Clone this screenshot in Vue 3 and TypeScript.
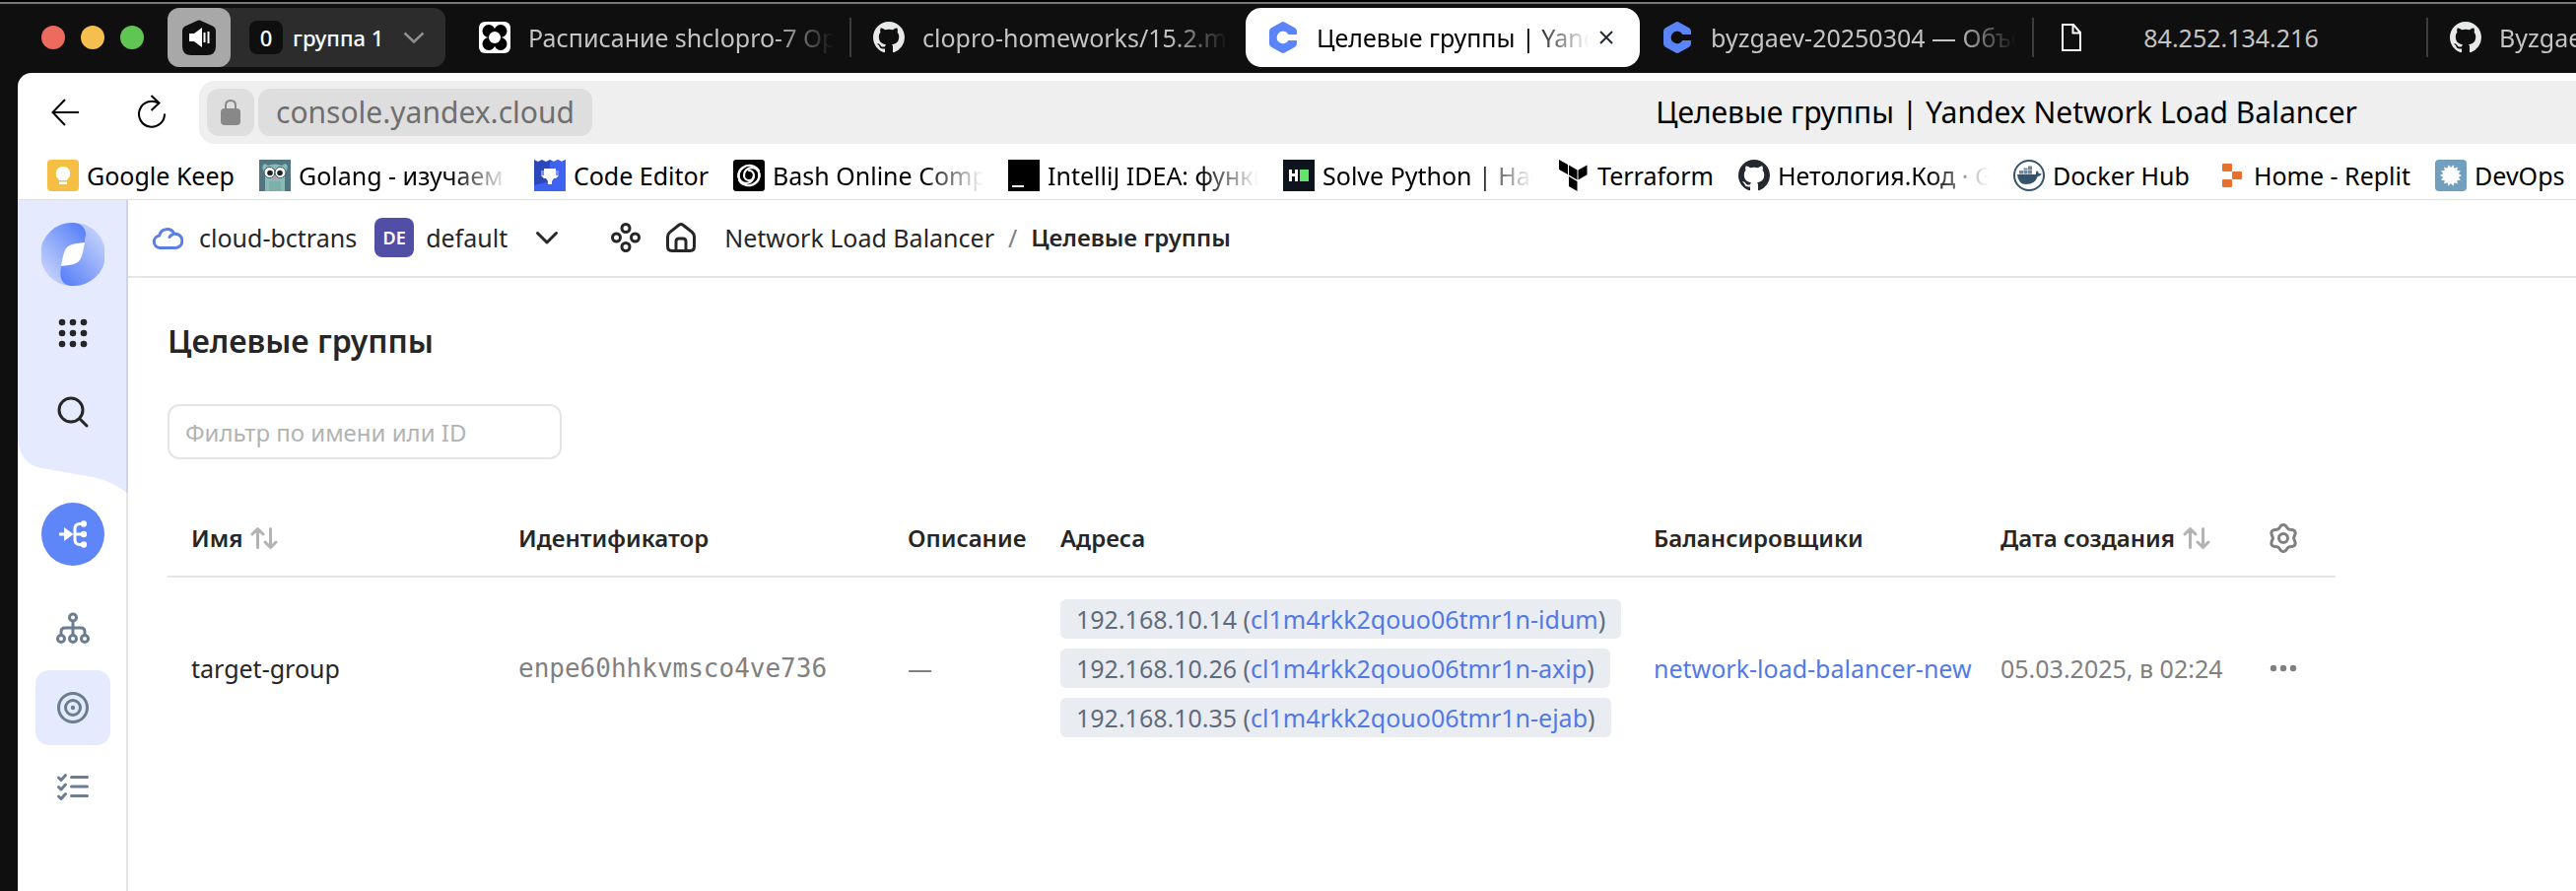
<script setup lang="ts">
import { ref } from 'vue'

interface Tab {
  icon: string
  title: string
  active?: boolean
  centered?: boolean
  divider?: boolean
}

interface Bookmark {
  icon: string
  title: string
  long?: boolean
}

interface Target {
  ip: string
  subnet: string
}

const tabs: Tab[] = [
  { icon: 'calendar', title: 'Расписание shclopro-7 Оренбург', divider: true },
  { icon: 'github', title: 'clopro-homeworks/15.2.md at main' },
  { icon: 'console', title: 'Целевые группы | Yandex Network', active: true },
  { icon: 'console', title: 'byzgaev-20250304 — Объекты', divider: true },
  { icon: 'file', title: '84.252.134.216', centered: true, divider: true },
  { icon: 'github', title: 'Byzgaev' },
]

const bookmarks: Bookmark[] = [
  { icon: 'keep', title: 'Google Keep' },
  { icon: 'gopher', title: 'Golang - изучаем Go', long: true },
  { icon: 'shield', title: 'Code Editor' },
  { icon: 'bash', title: 'Bash Online Compiler', long: true },
  { icon: 'terminal', title: 'IntelliJ IDEA: функции', long: true },
  { icon: 'hacker', title: 'Solve Python | HackerRank', long: true },
  { icon: 'terraform', title: 'Terraform' },
  { icon: 'github', title: 'Нетология.Код · GitHub', long: true },
  { icon: 'docker', title: 'Docker Hub' },
  { icon: 'replit', title: 'Home - Replit' },
  { icon: 'devops', title: 'DevOps' },
]

const sections = [
  { icon: 'tree', label: 'Балансировщики', active: false },
  { icon: 'target', label: 'Целевые группы', active: true },
  { icon: 'checklist', label: 'Операции', active: false },
]

const targets: Target[] = [
  { ip: '192.168.10.14', subnet: 'cl1m4rkk2qouo06tmr1n-idum' },
  { ip: '192.168.10.26', subnet: 'cl1m4rkk2qouo06tmr1n-axip' },
  { ip: '192.168.10.35', subnet: 'cl1m4rkk2qouo06tmr1n-ejab' },
]

const filter = ref('')

const gearPath =
  Array.from({ length: 72 }, (_, i) => {
    const a = (i / 72) * Math.PI * 2
    const r = 12.1 + 1.5 * Math.cos(6 * (a - Math.PI / 2))
    return `${i ? 'L' : 'M'}${(16 + r * Math.cos(a)).toFixed(2)} ${(16 - r * Math.sin(a)).toFixed(2)}`
  }).join('') + 'Z'

const splat =
  Array.from({ length: 28 }, (_, i) => {
    const a = (i / 28) * Math.PI * 2
    const r = i % 2 ? 8 : 11
    return `${i ? 'L' : 'M'}${(16 + r * Math.cos(a)).toFixed(2)} ${(16 + r * Math.sin(a)).toFixed(2)}`
  }).join('') + 'Z'
</script>

<template>
  <svg class="sprite" aria-hidden="true">
    <defs>
      <linearGradient id="blade-left" x1="0.8" y1="0" x2="0.1" y2="0.85">
        <stop offset="0" stop-color="#5c83f8" />
        <stop offset="1" stop-color="#c5d3fb" />
      </linearGradient>
      <linearGradient id="blade-right" x1="0.2" y1="1" x2="0.9" y2="0.15">
        <stop offset="0" stop-color="#5c83f8" />
        <stop offset="1" stop-color="#c5d3fb" />
      </linearGradient>
    </defs>
    <symbol id="i-calendar" viewBox="0 0 32 32">
      <rect width="32" height="32" rx="6" fill="#fff" />
      <circle cx="10" cy="9.500" r="6.500" />
      <circle cx="22" cy="9.500" r="6.500" />
      <circle cx="10" cy="22.500" r="6.500" />
      <circle cx="22" cy="22.500" r="6.500" />
      <circle cx="16" cy="16" r="6" fill="#fff" />
    </symbol>
    <symbol id="i-github" viewBox="0 0 16 16">
      <path
        fill="currentColor"
        d="M8 0C3.58 0 0 3.58 0 8c0 3.54 2.29 6.53 5.47 7.59.4.07.55-.17.55-.38 0-.19-.01-.82-.01-1.49-2.01.37-2.53-.49-2.69-.94-.09-.23-.48-.94-.82-1.13-.28-.15-.68-.52-.01-.53.63-.01 1.08.58 1.23.82.72 1.21 1.87.87 2.33.66.07-.52.28-.87.51-1.07-1.78-.2-3.64-.89-3.64-3.95 0-.87.31-1.59.82-2.15-.08-.2-.36-1.02.08-2.12 0 0 .67-.21 2.2.82.64-.18 1.32-.27 2-.27.68 0 1.36.09 2 .27 1.53-1.04 2.2-.82 2.2-.82.44 1.1.16 1.92.08 2.12.51.56.82 1.27.82 2.15 0 3.07-1.87 3.75-3.65 3.95.29.25.54.73.54 1.48 0 1.07-.01 1.93-.01 2.2 0 .21.15.46.55.38A8.013 8.013 0 0016 8c0-4.42-3.58-8-8-8z"
      />
    </symbol>
    <symbol id="i-console" viewBox="0 0 32 32">
      <path
        fill="#5c84f9"
        d="M14 .7q2-1.200 4 0L28 6.300q2 1.200 2 3.500V13h-8.600a6.300 6.300 0 1 0 0 6H30v3.200q0 2.300-2 3.500l-10 5.600q-2 1.200-4 0L4 25.700q-2-1.200-2-3.500V9.800q0-2.300 2-3.500z"
      />
    </symbol>
    <symbol id="i-file" viewBox="0 0 32 32">
      <path fill="none" stroke="#fff" stroke-width="2" d="M7 3h11l7 8v18H7zM17.500 3v8.500H25" />
    </symbol>
    <symbol id="i-keep" viewBox="0 0 32 32">
      <rect width="32" height="32" rx="4" fill="#f4bf42" />
      <path fill="#fff" d="M16 7a7.200 7.200 0 0 0-4 13.200V21h8v-.8A7.200 7.200 0 0 0 16 7zm-4 15.500h8V25h-8z" />
    </symbol>
    <symbol id="i-gopher" viewBox="0 0 32 32">
      <rect width="32" height="32" fill="#4f7681" />
      <path fill="#8abab5" d="M6 32V14Q2 9 4 5q2-2 5 1 7-3 14 0 3-3 5-1 2 4-2 9v18z" />
      <path fill="#6fa3a1" d="M10 22h12v10H10z" opacity=".5" />
      <circle cx="10.500" cy="13" r="5.500" fill="#fff" stroke="#33545e" />
      <circle cx="21.500" cy="13" r="5.500" fill="#fff" stroke="#33545e" />
      <circle cx="11" cy="13.500" r="2.800" fill="#222" />
      <circle cx="21" cy="13.500" r="2.800" fill="#222" />
      <ellipse cx="16" cy="18.500" rx="2.200" ry="1.500" fill="#d98f92" />
    </symbol>
    <symbol id="i-shield" viewBox="0 0 32 32">
      <path fill="#2c47b8" d="M0 0l4 2 4-2 4 2 4-2 4 2 4-2 4 2 4-2v32H0z" />
      <path fill="#3f62f0" d="M16 2l4 0 4-2 4 2 4-2v32H16zM0 26l16-4v10H0z" />
      <path fill="#fff" d="M10 9h12v2h3v5l-3 3h-2l-2 3v3h-4v-3l-2-3h-2l-3-3v-5h3z" />
      <path fill="#7c95f5" d="M7 11h3v5H7zM22 11h3v5h-3z" />
    </symbol>
    <symbol id="i-bash" viewBox="0 0 32 32">
      <rect width="32" height="32" rx="3" />
      <g fill="none" stroke="#fff" stroke-width="2.200" stroke-linecap="round">
        <path d="M16 11a5 5 0 1 1-5 5" />
        <path d="M11 16a8 8 0 0 1 12.500-6.500A9 9 0 0 1 22 24" />
        <path d="M21 16a8 8 0 0 1-12.500 6.500A9 9 0 0 1 10 8" />
        <path d="M10 8a11 11 0 0 1 16 3M22 24a11 11 0 0 1-16-3M26.500 14a11 11 0 0 1-4.500 10M5.500 18A11 11 0 0 1 10 8" />
      </g>
    </symbol>
    <symbol id="i-terminal" viewBox="0 0 32 32">
      <rect width="32" height="32" />
      <rect x="4" y="26" width="12" height="2" fill="#fff" />
    </symbol>
    <symbol id="i-hacker" viewBox="0 0 32 32">
      <rect width="32" height="32" fill="#0e141e" />
      <path fill="#fff" d="M6 10h3v4h3v-4h3v12h-3v-5H9v5H6z" />
      <rect x="17" y="10" width="9" height="12" fill="#62e36a" />
    </symbol>
    <symbol id="i-terraform" viewBox="0 0 32 32">
      <path d="M1 0l9 5v10l-9-5zM11 5.500l8.500 5v10L11 15.500zM20.500 10.500l9-5v9.800l-9 5.200zM11 17l8.500 5v10L11 27z" />
    </symbol>
    <symbol id="i-docker" viewBox="0 0 32 32">
      <circle cx="16" cy="16" r="15" fill="#fff" stroke="#34546b" stroke-width="2" />
      <path fill="#34546b" d="M4 15h19q-.5-2 1-4 1.500 1 1.800 3 1.700-.2 3 .6-1 2.200-4 2.400Q22 25 13 25q-8 0-9-10z" />
      <path fill="#6f8799" d="M6 11h4v3.500H6zM10.500 11h4v3.500h-4zM15 11h4v3.500h-4zM10.500 8.500h4v2h-4zM15 6.500h4v4h-4z" />
    </symbol>
    <symbol id="i-replit" viewBox="0 0 32 32">
      <g fill="#e8702f">
        <rect x="8" y="4" width="10" height="8" rx="1" />
        <rect x="18" y="12" width="10" height="8" rx="1" />
        <rect x="8" y="20" width="10" height="8" rx="1" />
      </g>
    </symbol>
    <symbol id="i-devops" viewBox="0 0 32 32">
      <rect width="32" height="32" rx="4" fill="#729fbd" />
      <path :d="splat" fill="#fff" />
    </symbol>
    <symbol id="i-tree" viewBox="0 0 34 34">
      <g fill="none" stroke="currentColor" stroke-width="3">
        <circle cx="17" cy="5.500" r="3.500" />
        <circle cx="5" cy="27" r="3.500" />
        <circle cx="17" cy="27" r="3.500" />
        <circle cx="29" cy="27" r="3.500" />
        <path d="M17 9v14.500M5 23.500V20q0-4 4-4h16q4 0 4 4v3.500" />
      </g>
    </symbol>
    <symbol id="i-target" viewBox="0 0 34 34">
      <g fill="none" stroke="currentColor" stroke-width="3">
        <circle cx="17" cy="17" r="14.500" />
        <circle cx="17" cy="17" r="7.500" />
      </g>
      <circle cx="17" cy="17" r="2.200" fill="currentColor" />
    </symbol>
    <symbol id="i-checklist" viewBox="0 0 34 34">
      <path
        fill="none"
        stroke="currentColor"
        stroke-width="3"
        stroke-linecap="round"
        stroke-linejoin="round"
        d="M15.500 7.500h16M15.500 17h16M15.500 26.500h16M2.500 8l2.500 2.500 4.500-5M2.500 17.500L5 20l4.500-5M2.500 27L5 29.500l4.500-5"
      />
    </symbol>
    <symbol id="i-sort" viewBox="0 0 28 24">
      <path
        fill="none"
        stroke="currentColor"
        stroke-width="3"
        stroke-linecap="round"
        stroke-linejoin="round"
        d="M7.500 21.500V3M2 8l5.500-5.500L13 8M20.500 2.500V21M15 16l5.500 5.500L26 16"
      />
    </symbol>
  </svg>

  <div class="window">
    <header class="tabstrip">
      <div class="lights">
        <span class="light light--red"></span>
        <span class="light light--yellow"></span>
        <span class="light light--green"></span>
      </div>
      <div class="group">
        <button class="group-sound" type="button" aria-label="Звук">
          <svg width="34" height="36" viewBox="0 0 34 36">
            <path d="M14 1.500q3-2 6 0l11 5q3 1.500 3 5V27q0 9-9 9H9q-9 0-9-9V11.500q0-3.500 3-5z" fill="#0f0f0f" />
            <path d="M7 14h5l8-6v20l-8-6H7z" fill="#fff" />
            <path d="M22.500 13v10M26.500 12v12" stroke="#fff" stroke-width="2" />
          </svg>
        </button>
        <button class="group-name" type="button">
          <span class="group-count">0</span>
          <span>группа 1</span>
          <svg class="group-chevron" width="22" height="12" viewBox="0 0 22 12">
            <path d="M1.500 1.500L11 10.500l9.500-9" fill="none" stroke="#8f8f8f" stroke-width="2.500" />
          </svg>
        </button>
      </div>
      <nav class="tabs" aria-label="Вкладки">
        <div
          v-for="tab in tabs"
          :key="tab.title"
          class="tab"
          :class="{ 'tab--active': tab.active, 'tab--centered': tab.centered, 'tab--divider': tab.divider }"
        >
          <svg class="favicon"><use :href="`#i-${tab.icon}`" /></svg>
          <span class="tab-title fade">{{ tab.title }}</span>
          <button v-if="tab.active" class="tab-close" type="button" aria-label="Закрыть вкладку">
            <svg width="14" height="14" viewBox="0 0 14 14">
              <path d="M1 1l12 12M13 1L1 13" stroke="#222b36" stroke-width="2" />
            </svg>
          </button>
        </div>
      </nav>
    </header>

    <div class="frame">
      <div class="toolbar">
        <button type="button" aria-label="Назад">
          <svg width="28" height="36" viewBox="0 0 28 36">
            <path d="M28 18H2M14 5L1.500 18 14 31" fill="none" stroke="#000" stroke-width="2" />
          </svg>
        </button>
        <button class="reload" type="button" aria-label="Обновить">
          <svg width="28" height="36" viewBox="0 0 28 36">
            <path d="M20.500 8.500A13 13 0 1 0 27 19.500M13.500 1l8 7.500-8 7.500" fill="none" stroke="#000" stroke-width="2" />
          </svg>
        </button>
        <div class="address">
          <button class="chip chip--lock" type="button" aria-label="Соединение защищено">
            <svg width="20" height="28" viewBox="0 0 20 28">
              <path d="M5 12V7q0-5 5-5t5 5v5" fill="none" stroke="#888" stroke-width="2" />
              <rect y="10" width="20" height="17" rx="4" fill="#888" />
            </svg>
          </button>
          <button class="chip chip--domain" type="button">console.yandex.cloud</button>
          <span class="page-title">Целевые группы | Yandex Network Load Balancer</span>
        </div>
      </div>

      <nav class="bookmarks" aria-label="Закладки">
        <a v-for="mark in bookmarks" :key="mark.title" class="bookmark" href="#">
          <svg class="favicon"><use :href="`#i-${mark.icon}`" /></svg>
          <span :class="{ 'bookmark-long fade': mark.long }">{{ mark.title }}</span>
        </a>
      </nav>

      <div class="console">
        <aside class="sidebar">
          <svg class="sidebar-wave" width="112" height="298" viewBox="0 0 112 298">
            <path d="M0 0h112v298C102 290 90 284 76 281L24 272C8 269 0 256 0 240z" fill="#e6eafe" />
            <path d="M110 0h2v298l-2-1.500z" fill="#cfd4e8" />
          </svg>
          <a class="logo" href="#" aria-label="Yandex Cloud">
            <svg width="64" height="64" viewBox="0 0 64 64">
              <path
                d="M32 0C42 0 46 7 45 13L44 20 20 44C18 53 19 62 30 64A32 32 0 0 1 32 0z"
                fill="url(#blade-left)"
              />
              <path
                d="M34 0C42 1 46 7 45 13L44 20 20 44C18 53 19 62 29 64H32A32 32 0 0 0 34 0z"
                fill="url(#blade-right)"
              />
              <path d="M44 20C41 36 40 39 34 41.500 30 43 26 43 20 44 23 28 24 25 30 22.500 34 21 38 21 44 20z" fill="#fff" />
            </svg>
          </a>
          <button class="side-item side-item--dark side-item--apps" type="button" aria-label="Все сервисы">
            <svg width="32" height="32" viewBox="0 0 32 32" fill="currentColor">
              <template v-for="y in 3" :key="y">
                <circle v-for="x in 3" :key="x" :cx="x * 11 - 6" :cy="y * 11 - 6" r="3.300" />
              </template>
            </svg>
          </button>
          <button class="side-item side-item--dark" type="button" aria-label="Поиск">
            <svg width="32" height="32" viewBox="0 0 32 32">
              <g fill="none" stroke="currentColor" stroke-width="3" stroke-linecap="round">
                <circle cx="14" cy="14" r="12" />
                <path d="M23 23l7 7" />
              </g>
            </svg>
          </button>
          <a class="service" href="#" aria-label="Network Load Balancer">
            <svg width="28" height="28" viewBox="0 0 28 28">
              <path d="M0 12.500h5V7l9.500 7L5 21v-5.500H0z" fill="#fff" />
              <path d="M26 3.500h-5q-5 0-5 5v11q0 5 5 5h5M16 14h9" fill="none" stroke="#fff" stroke-width="3" />
              <circle cx="25" cy="3.500" r="3.200" fill="#fff" />
              <circle cx="25" cy="14" r="3.200" fill="#fff" />
              <circle cx="25" cy="24.500" r="3.200" fill="#fff" />
            </svg>
          </a>
          <a
            v-for="section in sections"
            :key="section.icon"
            class="side-item"
            :class="{ 'side-item--active': section.active }"
            href="#"
            :aria-label="section.label"
          >
            <svg width="34" height="34"><use :href="`#i-${section.icon}`" /></svg>
          </a>
        </aside>

        <main class="main">
          <div class="crumbs">
            <a class="cloud" href="#">
              <svg width="32" height="24" viewBox="0 0 32 24">
                <path
                  d="M18 11.500a7 7 0 0 1 5.500-3.300 7.100 7.100 0 0 1 .5 14.300H8A6.300 6.300 0 0 1 7.700 10 8 8 0 0 1 22.700 8"
                  fill="none"
                  stroke="#5a7ee8"
                  stroke-width="3"
                  stroke-linecap="round"
                />
              </svg>
              <span>cloud-bctrans</span>
            </a>
            <button class="folder" type="button">
              <span class="badge">DE</span>
              <span>default</span>
              <svg class="folder-chevron" width="32" height="32" viewBox="0 0 32 32">
                <path
                  d="M6.500 11.500l9.500 9.500 9.500-9.500"
                  fill="none"
                  stroke="currentColor"
                  stroke-width="3"
                  stroke-linecap="round"
                  stroke-linejoin="round"
                />
              </svg>
            </button>
            <button class="crumb-icon" type="button" aria-label="Сервисы">
              <svg width="32" height="32" viewBox="0 0 32 32" fill="none" stroke="currentColor" stroke-width="3">
                <circle cx="16" cy="6.500" r="4" />
                <circle cx="6.500" cy="16" r="4" />
                <circle cx="25.500" cy="16" r="4" />
                <circle cx="16" cy="25.500" r="4" />
              </svg>
            </button>
            <a class="home" href="#" aria-label="Главная">
              <svg width="32" height="32" viewBox="0 0 32 32" fill="none" stroke="currentColor" stroke-width="3">
                <path d="M14 3.300q2-1.500 4 0l9 7q2.500 2 2.500 5V25q0 4.500-4.500 4.500H7Q2.500 29.500 2.500 25v-9.700q0-3 2.500-5z" />
                <path d="M11 29V20q0-3 3-3h4q3 0 3 3v9" />
              </svg>
            </a>
            <a class="crumb" href="#">Network Load Balancer</a>
            <span class="slash">/</span>
            <strong class="current">Целевые группы</strong>
          </div>

          <section class="content">
            <h1>Целевые группы</h1>
            <input v-model="filter" class="filter" type="text" placeholder="Фильтр по имени или ID" aria-label="Фильтр по имени или ID" />
            <table class="grid">
              <colgroup>
                <col class="c-name" />
                <col class="c-id" />
                <col class="c-desc" />
                <col class="c-addr" />
                <col class="c-lb" />
                <col class="c-date" />
                <col class="c-act" />
              </colgroup>
              <thead>
                <tr>
                  <th>
                    <button class="sort" type="button">Имя <svg width="28" height="24"><use href="#i-sort" /></svg></button>
                  </th>
                  <th>Идентификатор</th>
                  <th>Описание</th>
                  <th>Адреса</th>
                  <th>Балансировщики</th>
                  <th>
                    <button class="sort" type="button">Дата создания <svg width="28" height="24"><use href="#i-sort" /></svg></button>
                  </th>
                  <th class="actions">
                    <button type="button" aria-label="Настройки таблицы">
                      <svg width="32" height="32" viewBox="0 0 32 32" fill="none" stroke="#808080" stroke-width="3">
                        <path :d="gearPath" stroke-linejoin="round" />
                        <circle cx="16" cy="16" r="4.500" />
                      </svg>
                    </button>
                  </th>
                </tr>
              </thead>
              <tbody>
                <tr>
                  <td>target-group</td>
                  <td class="mono">enpe60hhkvmsco4ve736</td>
                  <td class="muted">—</td>
                  <td>
                    <ul class="tags">
                      <li v-for="target in targets" :key="target.ip" class="tag">
                        {{ target.ip }} (<a href="#">{{ target.subnet }}</a>)
                      </li>
                    </ul>
                  </td>
                  <td><a href="#">network-load-balancer-new</a></td>
                  <td class="muted">05.03.2025, в 02:24</td>
                  <td class="actions">
                    <button type="button" aria-label="Действия">
                      <svg width="28" height="8" viewBox="0 0 28 8" fill="#808080">
                        <circle cx="4" cy="4" r="3.200" />
                        <circle cx="14" cy="4" r="3.200" />
                        <circle cx="24" cy="4" r="3.200" />
                      </svg>
                    </button>
                  </td>
                </tr>
              </tbody>
            </table>
          </section>
        </main>
      </div>
    </div>
  </div>
</template>

<style>
body {
  margin: 0;
  overflow: hidden;
}
</style>

<style scoped>
.sprite {
  position: absolute;
  width: 0;
  height: 0;
}

.window {
  display: flex;
  flex-direction: column;
  box-sizing: border-box;
  min-height: 100vh;
  overflow: hidden;
  border-top: 2px solid #000;
  background: #0f0f0f;
  color: #262626;
  font: 25px/36px 'Noto Sans', 'Open Sans', sans-serif;
}

.window svg {
  display: block;
  flex: none;
}

button {
  padding: 0;
  border: 0;
  background: none;
  color: inherit;
  font: inherit;
  cursor: pointer;
}

a {
  color: #5279e6;
  text-decoration: none;
}

.favicon {
  width: 32px;
  height: 32px;
}

.fade {
  overflow: hidden;
  white-space: nowrap;
  -webkit-mask-image: linear-gradient(to left, transparent, #000 60px);
  mask-image: linear-gradient(to left, transparent, #000 60px);
}

/* Tab strip */
.tabstrip {
  display: flex;
  align-items: center;
  height: 60px;
  padding: 4px 0 6px 42px;
  border-top: 2px solid #777;
}

.lights {
  display: flex;
  gap: 16px;
  margin-right: 24px;
}

.light {
  width: 24px;
  height: 24px;
  border-radius: 50%;
}

.light--red {
  background: #ec6a5e;
}

.light--yellow {
  background: #f4bf4f;
}

.light--green {
  background: #61c554;
}

.group {
  display: flex;
  flex: none;
  width: 282px;
  height: 60px;
  margin-right: 12px;
  border-radius: 12px;
  background: #2c2c2c;
}

.group-sound {
  display: flex;
  align-items: center;
  justify-content: center;
  width: 64px;
  border-radius: 12px;
  background: #a8a8a8;
}

.group-name {
  display: flex;
  flex: 1;
  align-items: center;
  gap: 10px;
  padding-left: 19px;
  color: #fff;
  font-size: 22px;
  font-weight: 500;
}

.group-count {
  width: 34px;
  border-radius: 8px;
  background: #0f0f0f;
  line-height: 34px;
  text-align: center;
}

.group-chevron {
  margin-left: 10px;
}

.tabs {
  display: flex;
  flex: 1;
  min-width: 0;
  overflow: hidden;
}

.tab {
  position: relative;
  display: flex;
  flex: none;
  align-items: center;
  box-sizing: border-box;
  width: 400px;
  height: 60px;
  padding: 0 18px 0 22px;
  border-radius: 16px;
  color: #c4c4c4;
}

.tab .favicon {
  color: #e8eaea;
}

.tab-title {
  flex: 1;
  min-width: 0;
  margin-left: 18px;
}

.tab--divider::after {
  content: '';
  position: absolute;
  top: 10px;
  right: 0;
  width: 2px;
  height: 40px;
  background: #3c3c3c;
}

.tab--centered .tab-title {
  margin-right: 54px;
  text-align: center;
  -webkit-mask-image: none;
  mask-image: none;
}

.tab--active {
  padding-right: 27px;
  background: #fff;
  color: #000;
}

.tab-close {
  margin-left: 10px;
}

/* Toolbar */
.frame {
  display: flex;
  flex: 1;
  flex-direction: column;
  margin-left: 18px;
  overflow: hidden;
  border-top-left-radius: 14px;
  background: #fff;
}

.toolbar {
  display: flex;
  align-items: center;
  padding: 8px 0 0 34px;
}

.reload {
  margin: 0 34px 0 60px;
}

.address {
  display: flex;
  flex: 1;
  align-items: center;
  gap: 4px;
  padding: 8px;
  border-radius: 16px 0 0 16px;
  background: #efefef;
  font-size: 30px;
  line-height: 48px;
}

.chip {
  height: 48px;
  border-radius: 12px;
  background: #dedede;
  color: #6f6f6f;
}

.chip--lock {
  display: flex;
  align-items: center;
  justify-content: center;
  width: 48px;
}

.chip--domain {
  padding: 0 18px;
}

.page-title {
  margin: 0 214px 0 auto;
  color: #000;
  white-space: nowrap;
}

/* Bookmarks */
.bookmarks {
  display: flex;
  gap: 25px;
  padding: 14px 0 6px 30px;
  overflow: hidden;
  border-bottom: 1px solid #e0e0e0;
}

.bookmark {
  display: flex;
  flex: none;
  align-items: center;
  gap: 8px;
  color: #000;
  white-space: nowrap;
}

.bookmark .favicon {
  color: #24292f;
}

.bookmark-long {
  width: 214px;
}

/* Console */
.console {
  display: flex;
  flex: 1;
}

.sidebar {
  position: relative;
  display: flex;
  flex: none;
  flex-direction: column;
  align-items: center;
  gap: 4px;
  box-sizing: border-box;
  width: 112px;
  padding: 23px 0 0 2px;
  border-right: 2px solid #e5e5e5;
}

.sidebar > * {
  position: relative;
}

.sidebar .sidebar-wave {
  position: absolute;
  top: 0;
  left: 0;
}

.side-item {
  display: flex;
  align-items: center;
  justify-content: center;
  width: 76px;
  height: 76px;
  border-radius: 14px;
  color: #6b7d90;
}

.side-item--dark {
  color: #262626;
}

.side-item--apps {
  margin-top: 6px;
}

.side-item--active {
  background: #e6eafe;
}

.service {
  display: flex;
  align-items: center;
  justify-content: center;
  width: 64px;
  height: 64px;
  margin: 50px 0 22px;
  border-radius: 50%;
  background: #5f86f8;
}

.main {
  flex: 1;
  min-width: 0;
}

.crumbs {
  display: flex;
  align-items: center;
  height: 75px;
  padding: 0 0 2px 24px;
  border-bottom: 2px solid #e5e5e5;
}

.crumbs a {
  color: #262626;
}

.cloud {
  display: flex;
  align-items: center;
  gap: 16px;
}

.folder {
  display: flex;
  align-items: center;
  gap: 12px;
  margin-left: 18px;
}

.badge {
  width: 40px;
  border-radius: 8px;
  background: #504fa5;
  color: #fff;
  font-size: 18px;
  font-weight: 600;
  line-height: 40px;
}

.folder-chevron {
  margin-left: 12px;
}

.crumb-icon {
  margin: 0 24px 0 48px;
}

.crumb {
  margin-left: 28px;
}

.slash {
  margin: 0 14px;
  color: #808080;
}

.current {
  font-size: 24px;
  font-weight: 600;
}

.content {
  padding: 42px 40px;
}

h1 {
  margin: 0;
  font-size: 32px;
  font-weight: 600;
  line-height: 44px;
}

.filter {
  display: block;
  box-sizing: border-box;
  width: 400px;
  height: 56px;
  margin: 42px 0;
  padding: 0 16px;
  border: 2px solid #e5e5e5;
  border-radius: 12px;
  background: #fff;
  color: #262626;
  font: inherit;
  font-size: 24px;
}

.filter::placeholder {
  color: #b3b3b3;
}

/* Table */
.grid {
  width: 100%;
  max-width: 2200px;
  border-collapse: separate;
  border-spacing: 0;
  table-layout: fixed;
}

.c-name {
  width: 340px;
}

.c-id {
  width: 395px;
}

.c-desc {
  width: 155px;
}

.c-addr {
  width: 602px;
}

.c-lb {
  width: 352px;
}

.c-date {
  width: 258px;
}

.c-act {
  width: 98px;
}

th,
td {
  padding: 0 0 0 16px;
  text-align: left;
  vertical-align: middle;
  white-space: nowrap;
}

th:first-child,
td:first-child {
  padding-left: 24px;
}

th {
  height: 76px;
  border-bottom: 2px solid #e5e5e5;
  font-size: 24px;
  font-weight: 600;
}

td {
  padding-top: 22px;
  padding-bottom: 22px;
}

.sort {
  display: flex;
  align-items: center;
  gap: 8px;
}

.sort svg {
  color: #b3b3b3;
}

.mono {
  color: #808080;
  font-family: 'DejaVu Sans Mono', monospace;
  font-size: 26px;
}

.muted {
  color: #808080;
}

.tags {
  display: flex;
  flex-direction: column;
  align-items: flex-start;
  gap: 10px;
  margin: 0;
  padding: 0;
  list-style: none;
}

.tag {
  padding: 0 16px;
  border-radius: 6px;
  background: #e9edf1;
  color: #5f6b7c;
  line-height: 40px;
}

th.actions,
td.actions {
  padding-left: 0;
}

.actions button {
  display: flex;
  align-items: center;
  justify-content: center;
  width: 90px;
  height: 40px;
}
</style>
